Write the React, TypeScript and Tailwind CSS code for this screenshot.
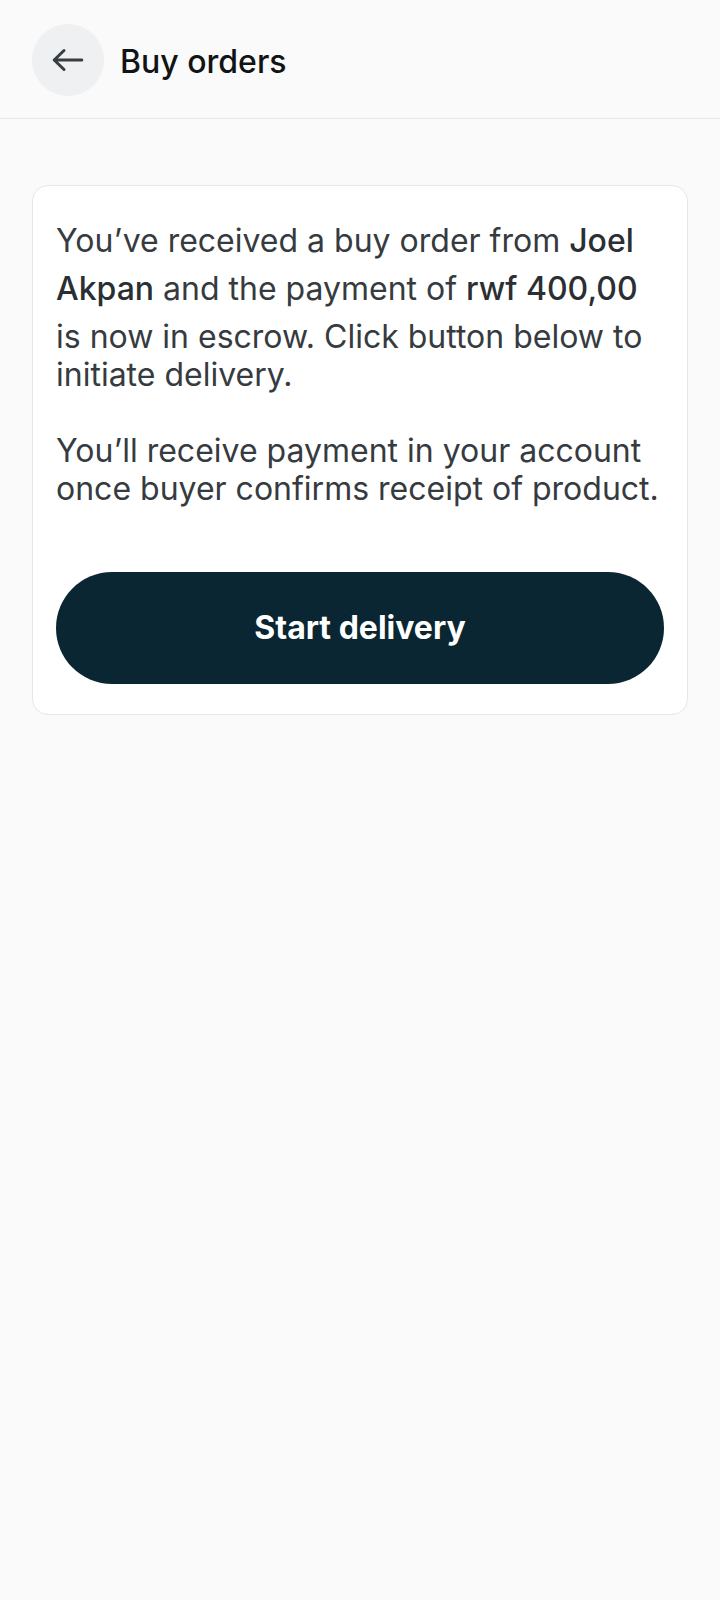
import React from 'react';

const font = { fontFamily: 'Inter, "Noto Sans", sans-serif' };

function BackArrow() {
  return (
    <svg width="36" height="36" viewBox="0 0 36 36" fill="none">
      <path
        d="M4.2 18H31.8M14 8.5 4.2 18 14 27.5"
        stroke="#393e43"
        strokeWidth="3"
        strokeLinecap="round"
        strokeLinejoin="round"
      />
    </svg>
  );
}

export default function App() {
  return (
    <div className="min-h-[1600px] bg-[#fafafa]" style={font}>
      {/* Header */}
      <div className="flex items-center gap-4 px-8 pt-6 pb-[22px] border-b border-[#e4e8e8]">
        <button className="flex h-[72px] w-[72px] items-center justify-center rounded-full bg-[#eff0f2]">
          <BackArrow />
        </button>
        <h1 className="mt-[4px] text-[32px] font-medium text-[#111315] leading-[38px]">Buy orders</h1>
      </div>

      <div className="px-8 pt-[66px]">
        <div className="rounded-2xl border border-[#e4e8e8] bg-white px-[23px] pt-[36px] pb-[30px]">
          <p className="text-[32px] leading-[38px] text-[#363b3f]">
            You’ve received a buy order from{' '}
            <span className="inline-block pb-[10px] font-medium text-[#2a2f33]">Joel</span>{' '}
            <span className="inline-block pb-[10px] font-medium text-[#2a2f33]">Akpan</span> and the payment of{' '}
            <span className="inline-block pb-[10px] font-medium text-[#2a2f33]">rwf 400,00</span> is now in escrow.
            Click button below to initiate delivery.
          </p>
          <p className="mt-[38px] text-[32px] leading-[38px] text-[#363b3f]">
            You’ll receive payment in your account once buyer confirms receipt of product.
          </p>

          <button className="mt-[64px] flex h-[112px] w-full items-center justify-center rounded-full bg-[#0a2632] text-[32px] font-bold text-white">
            Start delivery
          </button>
        </div>
      </div>
    </div>
  );
}
